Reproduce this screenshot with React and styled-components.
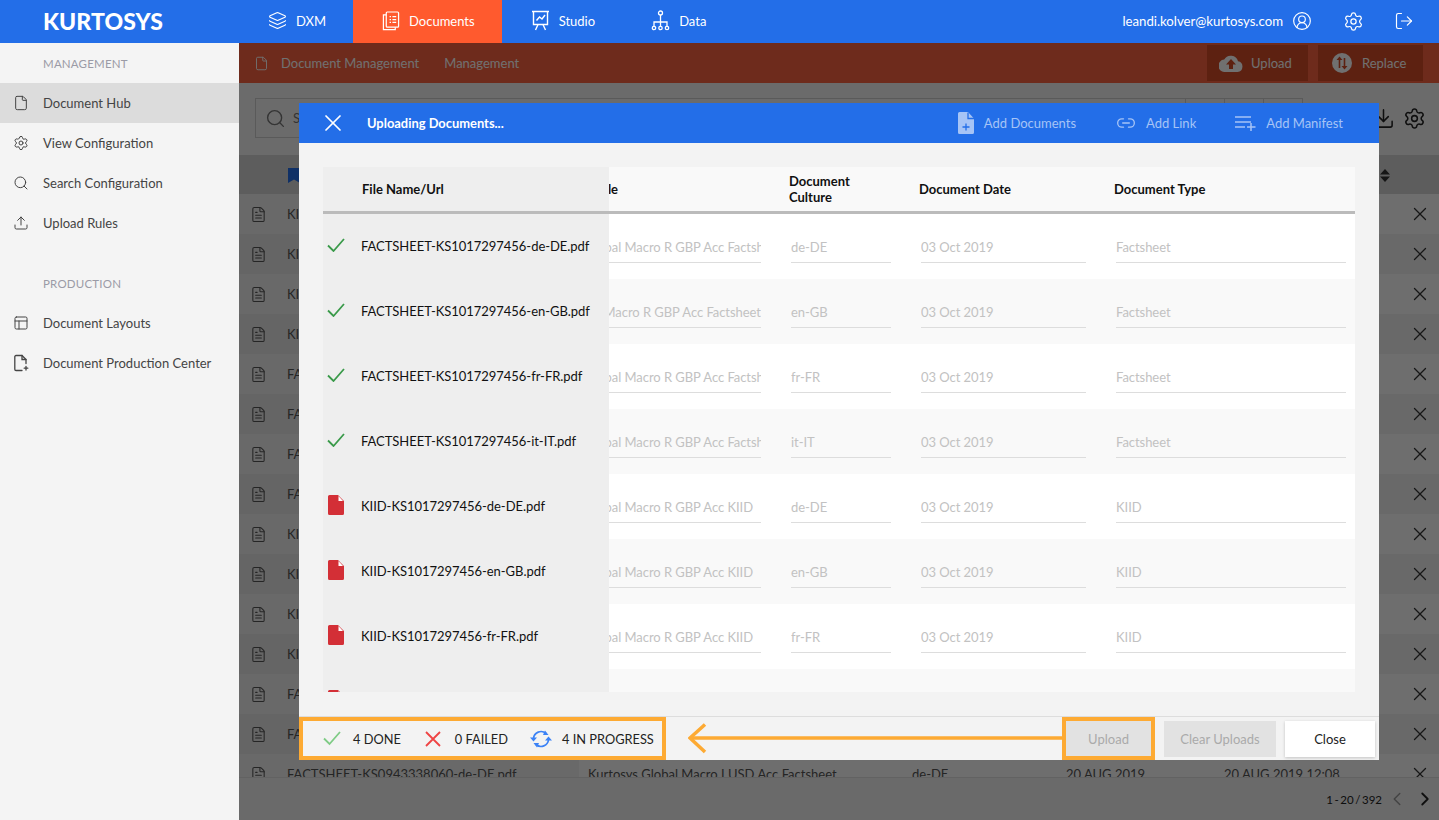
import React from 'react';
import styled, { createGlobalStyle } from 'styled-components';
import { ChevronLeft, ChevronRight, CircleUserRound, Download, File, FileText, Layers, Link2, LogOut, PanelsTopLeft, Search, Settings, Upload, X } from 'lucide-react';

const GlobalStyle = createGlobalStyle`
  html, body {
    margin: 0;
    height: 100%;
    overflow: hidden;
    background: #f4f4f4;
    font-family: Lato, 'Liberation Sans', sans-serif;
  }
  * {
    box-sizing: border-box;
  }
`;

const Page = styled.div`
  width: 1439px;
  height: 820px;
  display: flex;
  flex-direction: column;
  overflow: hidden;
`;

const TopBar = styled.header`
  height: 43px;
  flex: none;
  display: flex;
  align-items: stretch;
  background: #236ee8;
  color: #fff;
`;

const Logo = styled.div`
  width: 239px;
  padding-left: 43px;
  font-size: 23px;
  font-weight: 900;
  letter-spacing: 0.1px;
  line-height: 42px;
`;

const NavItem = styled.div`
  display: flex;
  align-items: center;
  gap: 9px;
  padding: 0 27px 2px 29px;
  font-size: 13px;
  background: ${(p) => (p.$active ? '#ff5a2e' : 'transparent')};
`;

const UserArea = styled.div`
  margin-left: auto;
  padding: 0 25px 1px 0;
  display: flex;
  align-items: center;
  font-size: 13.2px;
`;

const UserIcon = styled.span`
  display: flex;
  margin-left: ${(p) => p.$gap}px;
`;

const Content = styled.div`
  flex: 1;
  display: flex;
  min-height: 0;
`;

const Sidebar = styled.aside`
  width: 239px;
  flex: none;
  background: #f4f4f4;
`;

const SideTitle = styled.div`
  height: 40px;
  margin-top: ${(p) => (p.$spaced ? '20px' : '0')};
  padding: 1px 0 0 43px;
  line-height: 40px;
  font-size: 11.5px;
  letter-spacing: 0.2px;
  color: #9b9ba6;
`;

const SideItem = styled.div`
  height: 40px;
  padding-left: 13px;
  display: flex;
  align-items: center;
  gap: 14px;
  font-size: 13px;
  color: #444;
  background: ${(p) => (p.$active ? '#dcdcdc' : 'transparent')};
`;

const Main = styled.main`
  position: relative;
  flex: 1;
  min-width: 0;
  display: flex;
  flex-direction: column;
  background: #f4f4f4;
`;

const SubBar = styled.div`
  height: 40px;
  flex: none;
  padding: 0 16px 0 15px;
  display: flex;
  align-items: center;
  background: #fb6340;
  color: #fff;
  font-size: 13px;
  white-space: nowrap;
`;

const Crumb = styled.span`
  margin-left: ${(p) => p.$gap}px;
`;

const SubActions = styled.div`
  margin-left: auto;
  display: flex;
  gap: 10px;
`;

const SubButton = styled.div`
  width: ${(p) => p.$width}px;
  height: 36px;
  padding-left: ${(p) => p.$pad}px;
  display: flex;
  align-items: center;
  gap: ${(p) => p.$inner}px;
  background: #d44d28;
`;

const SearchRow = styled.div`
  height: 72px;
  flex: none;
  padding: 15px 13px 15px 16px;
  display: flex;
  align-items: flex-start;
  color: #222;
`;

const SearchBox = styled.div`
  width: 1048px;
  height: 40px;
  padding-left: 9px;
  display: flex;
  align-items: center;
  gap: 7px;
  border: 1px solid #ccc;
  font-size: 13px;
  color: #777;
`;

const SearchSegments = styled.div`
  margin-left: auto;
  height: 100%;
  display: flex;
`;

const SearchSegment = styled.div`
  width: 39px;
  border-left: 1px solid #ccc;
`;

const RowTools = styled.div`
  margin-left: auto;
  padding-top: 9px;
  display: flex;
  gap: 8px;
`;

const BackHead = styled.div`
  height: 39px;
  flex: none;
  padding: 1px 49px 0 49px;
  display: flex;
  align-items: center;
  justify-content: space-between;
  background: #d4d4d4;
`;

const BackRows = styled.div`
  flex: 1;
  min-height: 0;
  overflow: hidden;
`;

const BackRow = styled.div`
  height: 40px;
  display: grid;
  grid-template-columns: 340px 324px 154px 158px 1fr 32px;
  align-items: center;
  font-size: 13px;
  color: #555;
  background: ${(p) => (p.$odd ? '#f0f0f0' : '#fafafa')};
`;

const BackName = styled.div`
  height: 100%;
  padding-left: 11px;
  display: flex;
  align-items: center;
  gap: 20px;
  color: #555;
  background: rgba(0, 0, 0, 0.04);
`;

const BackCell = styled.div`
  padding-left: 9px;
  white-space: nowrap;
`;

const RemoveIcon = styled(X)`
  margin-left: 2px;
  color: #333;
`;

const Pagination = styled.div`
  height: 43px;
  flex: none;
  padding-right: 3px;
  display: flex;
  align-items: center;
  justify-content: flex-end;
  gap: 6px;
  border-top: 1px solid #e0e0e0;
  background: #f1f1f1;
  font-size: 11.5px;
  color: #222;
`;

const PageCount = styled.span`
  margin-right: -2px;
  word-spacing: -1.4px;
`;

const Scrim = styled.div`
  position: absolute;
  inset: 0;
  padding: 60px;
  background: rgba(0, 0, 0, 0.56);
`;

const Modal = styled.section`
  height: 100%;
  display: flex;
  flex-direction: column;
  background: #f3f3f3;
`;

const ModalHead = styled.div`
  height: 40px;
  flex: none;
  padding-left: 20px;
  padding-right: 36px;
  display: flex;
  align-items: center;
  background: #236ee8;
  color: #fff;
`;

const ModalTitle = styled.div`
  margin-left: 20px;
  font-size: 12.9px;
  font-weight: 700;
`;

const ModalAction = styled.div`
  margin-left: ${(p) => p.$gap};
  display: flex;
  align-items: center;
  gap: 10px;
  font-size: 13px;
  color: #a6c4f6;
`;

const ModalBody = styled.div`
  flex: 1;
  min-height: 0;
  padding: 24px;
`;

const TableWrap = styled.div`
  height: 100%;
  overflow: hidden;
  background: #fff;
`;

const HeadRow = styled.div`
  height: 47px;
  display: grid;
  grid-template-columns: 286px 180px 130px 195px 1fr;
  align-items: center;
  border-bottom: 3px solid #bbb;
  background: #f9f9f9;
  font-size: 13px;
  font-weight: 700;
  line-height: 16px;
  color: #111;
`;

const HeadName = styled.div`
  height: 100%;
  padding-left: 39px;
  display: flex;
  align-items: center;
  background: #eee;
`;

const HeadClip = styled.div`
  overflow: hidden;
`;

const HeadTitle = styled.div`
  margin-left: -17px;
`;

const HeadWrap = styled.div`
  width: 80px;
`;

const FileRow = styled.div`
  height: 65px;
  display: grid;
  grid-template-columns: 286px 182px 130px 195px 1fr;
  align-items: center;
  background: ${(p) => (p.$odd ? '#f9f9f9' : '#fff')};
`;

const NameCell = styled.div`
  height: 100%;
  padding: 0 0 2px 4px;
  display: flex;
  align-items: center;
  gap: 16px;
  background: #eee;
  font-size: 13px;
  letter-spacing: -0.04px;
  color: #111;
`;

const StatusSlot = styled.span`
  width: 18px;
  flex: none;
  margin-bottom: 1px;
  display: flex;
  justify-content: center;
`;

const Field = styled.div`
  height: 32px;
  margin-right: ${(p) => p.$right}px;
  overflow: hidden;
  white-space: nowrap;
  border-bottom: 1px solid #ddd;
  font-size: 13px;
  letter-spacing: -0.05px;
  line-height: 33px;
  color: #c2c2c2;
`;

const ShiftedText = styled.div`
  margin-left: ${(p) => p.$shift}px;
`;

const ModalFoot = styled.div`
  height: 44px;
  flex: none;
  display: flex;
  align-items: stretch;
  border-top: 1px solid #ddd;
`;

const StatusBox = styled.div`
  width: 367px;
  flex: none;
  padding-left: 20px;
  display: flex;
  align-items: center;
  border: 4px solid #fdaa33;
  font-size: 12.8px;
  color: #222;
`;

const StatusItem = styled.div`
  display: flex;
  align-items: center;
  gap: ${(p) => p.$gap}px;
  margin-right: ${(p) => p.$right}px;
`;

const ArrowSlot = styled.div`
  flex: 1;
  display: flex;
  align-items: center;
  padding-left: 22px;
`;

const UploadFrame = styled.div`
  width: 93px;
  flex: none;
  display: flex;
  border: 4px solid #fdaa33;
`;

const FootButton = styled.div`
  flex: ${(p) => (p.$width ? 'none' : '1')};
  width: ${(p) => (p.$width ? `${p.$width}px` : 'auto')};
  margin: ${(p) => p.$margin || '0'};
  display: flex;
  align-items: center;
  justify-content: center;
  font-size: 13px;
  color: ${(p) => (p.$primary ? '#222' : '#aaa')};
  background: ${(p) => (p.$primary ? '#fff' : '#e2e2e2')};
  box-shadow: ${(p) => (p.$primary ? '0 1px 3px rgba(0, 0, 0, 0.2)' : 'none')};
`;

const DocumentsIcon = () => (
  <svg width="18" height="20" viewBox="0 0 19 21" fill="none" stroke="#fff" strokeWidth="1.3">
    <rect x="4.5" y="1" width="13" height="16" rx="1" />
    <path d="M4.5 4H1.5V19.5H14V17" />
    <path d="M8 6h1.5M11 6h4M8 9h1.5M11 9h4M8 12h1.5M11 12h4" />
  </svg>
);

const StudioIcon = () => (
  <svg width="19" height="21" viewBox="0 0 19 21" fill="none" stroke="#fff" strokeWidth="1.4">
    <path d="M1 1.5h17M2.5 1.5V14.5h14V1.5" />
    <path d="M5.5 10.5l3-3.5 2.5 2 3-4" />
    <path d="M7 14.5L4.5 20M12 14.5l2.5 5.5" />
  </svg>
);

const DataIcon = () => (
  <svg width="19" height="21" viewBox="0 0 19 21" fill="none" stroke="#fff" strokeWidth="1.3">
    <circle cx="9.5" cy="3" r="2" />
    <path d="M9.5 5v11M3 17v-5h13v5" />
    <circle cx="3" cy="18" r="1.7" />
    <circle cx="9.5" cy="18" r="1.7" />
    <circle cx="16" cy="18" r="1.7" />
  </svg>
);

const ProductionIcon = () => (
  <svg width="16" height="18" viewBox="0 0 16 18" fill="none" stroke="#444" strokeWidth="1.3" strokeLinecap="round">
    <path d="M9 16.5H3a1.2 1.2 0 0 1-1.2-1.2V2.700A1.2 1.2 0 0 1 3 1.5h6l4 4v4" />
    <path d="M9 1.5v4h4M13 12.500v3.500M11.200 14.200h3.600" />
  </svg>
);

const CloudIcon = () => (
  <svg width="24" height="18" viewBox="0 0 24 18">
    <path fill="#fff" d="M19 7.3A7.5 7.5 0 0 0 5.2 5.6 6.2 6.2 0 0 0 6 18h12.5a5.4 5.4 0 0 0 .5-10.7z" />
    <path fill="#d44d28" d="M12 5l5 5.5h-3V15h-4v-4.5H7z" />
  </svg>
);

const ReplaceIcon = () => (
  <svg width="20" height="20" viewBox="0 0 20 20">
    <circle cx="10" cy="10" r="10" fill="#fff" />
    <path fill="none" stroke="#d44d28" strokeWidth="1.6" d="M7.5 15V6M12.5 5v9" />
    <path fill="#d44d28" d="M7.5 3.5l3 3.5h-6zM12.5 16.5l-3-3.5h6z" />
  </svg>
);

const AddDocIcon = () => (
  <svg width="16" height="22" viewBox="0 0 16 22">
    <path fill="#a6c4f6" d="M1.5 0H10l6 6.5v14a1.5 1.5 0 0 1-1.5 1.5h-13A1.5 1.5 0 0 1 0 20.5v-19A1.5 1.5 0 0 1 1.5 0z" />
    <path fill="none" stroke="#236ee8" strokeWidth="1.3" d="M8 11.500v7M4.500 15h7M10 0.500V6.500h6" />
  </svg>
);

const ManifestIcon = () => (
  <svg width="21" height="16" viewBox="0 0 21 16" fill="none" stroke="#a6c4f6" strokeWidth="1.5">
    <path d="M0 2h16M0 7h16M0 12h10M16 8v8M12 12h8.5" />
  </svg>
);

const BookmarkIcon = () => (
  <svg width="12" height="15" viewBox="0 0 12 15">
    <path fill="#236ee8" d="M0 0h12v15l-6-3.5L0 15z" />
  </svg>
);

const SortIcon = () => (
  <svg width="10" height="13" viewBox="0 0 10 13">
    <path fill="#333" d="M5 0l5 5.5H0zM5 13L0 7.5h10z" />
  </svg>
);

const CheckIcon = ({ color, width = 18 }) => (
  <svg width={width} height={width * 0.8} viewBox="0 0 18 14.4" fill="none" stroke={color} strokeWidth="1.8">
    <path d="M1 7.5l5.5 5.500L17 1" />
  </svg>
);

const FailIcon = () => (
  <svg width="16" height="16" viewBox="0 0 16 16" fill="none" stroke="#ef4444" strokeWidth="1.8">
    <path d="M1 1l14 14M15 1L1 15" />
  </svg>
);

const SyncIcon = () => (
  <svg width="22" height="18" viewBox="0 0 22 18">
    <g fill="none" stroke="#3b82f6" strokeWidth="1.7">
      <path d="M3.5 8.5A7.5 7.5 0 0 1 16 3.5" />
      <path d="M18.5 9.5A7.5 7.5 0 0 1 6 14.5" />
    </g>
    <path fill="#3b82f6" d="M0 7.5h7l-3.5 4zM22 10.5h-7l3.5-4zM15 0.500l3.500 4.500H13z" />
    <path fill="#3b82f6" d="M7 17.5L3.500 13H9z" />
  </svg>
);

const RedDocIcon = () => (
  <svg width="16" height="20" viewBox="0 0 16 20">
    <path fill="#d32f36" d="M1.5 0H10l6 6v12.5a1.5 1.5 0 0 1-1.5 1.5h-13A1.5 1.5 0 0 1 0 18.5v-17A1.5 1.5 0 0 1 1.5 0z" />
    <path fill="#fff" d="M10.5 1l4.500 5h-4.500z" />
  </svg>
);

const ArrowIcon = () => (
  <svg width="374" height="32" viewBox="0 0 374 32" fill="none" stroke="#fdaa33" strokeWidth="3.5">
    <path d="M374 15H2" />
    <path d="M17 1.500L2 15l15 14" />
  </svg>
);

const sideManagement = [
  { label: 'Document Hub', icon: <File size={16} strokeWidth={1.5} />, active: true },
  { label: 'View Configuration', icon: <Settings size={16} strokeWidth={1.5} /> },
  { label: 'Search Configuration', icon: <Search size={16} strokeWidth={1.5} /> },
  { label: 'Upload Rules', icon: <Upload size={16} strokeWidth={1.5} /> },
];

const sideProduction = [
  { label: 'Document Layouts', icon: <PanelsTopLeft size={16} strokeWidth={1.5} /> },
  { label: 'Document Production Center', icon: <ProductionIcon /> },
];

const backRows = [
  ['KIID-KS1017297456-de-DE.pdf', 'Kurtosys Global Macro R GBP Acc KIID', 'de-DE'],
  ['KIID-KS1017297456-en-GB.pdf', 'Kurtosys Global Macro R GBP Acc KIID', 'en-GB'],
  ['KIID-KS1017297456-fr-FR.pdf', 'Kurtosys Global Macro R GBP Acc KIID', 'fr-FR'],
  ['KIID-KS1017297456-it-IT.pdf', 'Kurtosys Global Macro R GBP Acc KIID', 'it-IT'],
  ['FACTSHEET-KS1017297456-de-DE.pdf', 'Kurtosys Global Macro R GBP Acc Factsheet', 'de-DE'],
  ['FACTSHEET-KS1017297456-en-GB.pdf', 'Kurtosys Global Macro R GBP Acc Factsheet', 'en-GB'],
  ['FACTSHEET-KS1017297456-fr-FR.pdf', 'Kurtosys Global Macro R GBP Acc Factsheet', 'fr-FR'],
  ['FACTSHEET-KS1017297456-it-IT.pdf', 'Kurtosys Global Macro R GBP Acc Factsheet', 'it-IT'],
  ['KIID-KS0943338060-de-DE.pdf', 'Kurtosys Global Macro I USD Acc KIID', 'de-DE'],
  ['KIID-KS0943338060-en-GB.pdf', 'Kurtosys Global Macro I USD Acc KIID', 'en-GB'],
  ['KIID-KS0943338060-fr-FR.pdf', 'Kurtosys Global Macro I USD Acc KIID', 'fr-FR'],
  ['KIID-KS0943338060-it-IT.pdf', 'Kurtosys Global Macro I USD Acc KIID', 'it-IT'],
  ['FACTSHEET-KS0943338060-it-IT.pdf', 'Kurtosys Global Macro I USD Acc Factsheet', 'it-IT'],
  ['FACTSHEET-KS0943338060-fr-FR.pdf', 'Kurtosys Global Macro I USD Acc Factsheet', 'fr-FR'],
  ['FACTSHEET-KS0943338060-de-DE.pdf', 'Kurtosys Global Macro I USD Acc Factsheet', 'de-DE'],
];

const uploads = [
  { name: 'FACTSHEET-KS1017297456-de-DE.pdf', title: 'Kurtosys Global Macro R GBP Acc Factsheet', culture: 'de-DE', type: 'Factsheet', done: true, shift: -77 },
  { name: 'FACTSHEET-KS1017297456-en-GB.pdf', title: 'Kurtosys Global Macro R GBP Acc Factsheet', culture: 'en-GB', type: 'Factsheet', done: true, shift: -98 },
  { name: 'FACTSHEET-KS1017297456-fr-FR.pdf', title: 'Kurtosys Global Macro R GBP Acc Factsheet', culture: 'fr-FR', type: 'Factsheet', done: true, shift: -77 },
  { name: 'FACTSHEET-KS1017297456-it-IT.pdf', title: 'Kurtosys Global Macro R GBP Acc Factsheet', culture: 'it-IT', type: 'Factsheet', done: true, shift: -77 },
  { name: 'KIID-KS1017297456-de-DE.pdf', title: 'Kurtosys Global Macro R GBP Acc KIID', culture: 'de-DE', type: 'KIID', shift: -77 },
  { name: 'KIID-KS1017297456-en-GB.pdf', title: 'Kurtosys Global Macro R GBP Acc KIID', culture: 'en-GB', type: 'KIID', shift: -77 },
  { name: 'KIID-KS1017297456-fr-FR.pdf', title: 'Kurtosys Global Macro R GBP Acc KIID', culture: 'fr-FR', type: 'KIID', shift: -77 },
  { name: 'KIID-KS1017297456-it-IT.pdf', title: 'Kurtosys Global Macro R GBP Acc KIID', culture: 'it-IT', type: 'KIID', shift: -77 },
];

export default function App() {
  return (
    <Page>
      <GlobalStyle />
      <TopBar>
        <Logo>KURTOSYS</Logo>
        <NavItem><Layers size={19} strokeWidth={1.4} />DXM</NavItem>
        <NavItem $active><DocumentsIcon />Documents</NavItem>
        <NavItem><StudioIcon />Studio</NavItem>
        <NavItem><DataIcon />Data</NavItem>
        <UserArea>
          leandi.kolver@kurtosys.com
          <UserIcon $gap={9}><CircleUserRound size={20} strokeWidth={1.4} /></UserIcon>
          <UserIcon $gap={31}><Settings size={21} strokeWidth={1.4} /></UserIcon>
          <UserIcon $gap={30}><LogOut size={20} strokeWidth={1.4} /></UserIcon>
        </UserArea>
      </TopBar>
      <Content>
        <Sidebar>
          <SideTitle>MANAGEMENT</SideTitle>
          {sideManagement.map((item) => (
            <SideItem key={item.label} $active={item.active}>{item.icon}{item.label}</SideItem>
          ))}
          <SideTitle $spaced>PRODUCTION</SideTitle>
          {sideProduction.map((item) => (
            <SideItem key={item.label}>{item.icon}{item.label}</SideItem>
          ))}
        </Sidebar>
        <Main>
          <SubBar>
            <File size={15} strokeWidth={1.5} />
            <Crumb $gap={12}>Document Management</Crumb>
            <Crumb $gap={25}>Management</Crumb>
            <SubActions>
              <SubButton $width={101} $pad={12} $inner={8}><CloudIcon />Upload</SubButton>
              <SubButton $width={105} $pad={14} $inner={10}><ReplaceIcon />Replace</SubButton>
            </SubActions>
          </SubBar>
          <SearchRow>
            <SearchBox>
              <Search size={21} strokeWidth={1.6} />Search
              <SearchSegments><SearchSegment /><SearchSegment /><SearchSegment /></SearchSegments>
            </SearchBox>
            <RowTools>
              <Download size={23} strokeWidth={1.6} />
              <Settings size={23} strokeWidth={1.6} />
            </RowTools>
          </SearchRow>
          <BackHead><BookmarkIcon /><SortIcon /></BackHead>
          <BackRows>
            {backRows.map(([name, title, culture], i) => (
              <BackRow key={name} $odd={i % 2 === 1}>
                <BackName><FileText size={17} strokeWidth={1.5} />{name}</BackName>
                <BackCell>{title}</BackCell>
                <BackCell>{culture}</BackCell>
                <BackCell>20 AUG 2019</BackCell>
                <BackCell>20 AUG 2019 12:08</BackCell>
                <RemoveIcon size={22} strokeWidth={1.4} />
              </BackRow>
            ))}
          </BackRows>
          <Pagination>
            <PageCount>1 - 20 / 392</PageCount>
            <ChevronLeft size={22} strokeWidth={1.6} color="#999" />
            <ChevronRight size={22} strokeWidth={2} />
          </Pagination>
          <Scrim>
            <Modal>
              <ModalHead>
                <X size={28} strokeWidth={1.5} />
                <ModalTitle>Uploading Documents...</ModalTitle>
                <ModalAction $gap="auto"><AddDocIcon />Add Documents</ModalAction>
                <ModalAction $gap="40px"><Link2 size={20} strokeWidth={1.6} />Add Link</ModalAction>
                <ModalAction $gap="39px"><ManifestIcon />Add Manifest</ModalAction>
              </ModalHead>
              <ModalBody>
                <TableWrap>
                  <HeadRow>
                    <HeadName>File Name/Url</HeadName>
                    <HeadClip><HeadTitle>Title</HeadTitle></HeadClip>
                    <HeadWrap>Document Culture</HeadWrap>
                    <div>Document Date</div>
                    <div>Document Type</div>
                  </HeadRow>
                  {uploads.map((file, i) => (
                    <FileRow key={file.name} $odd={i % 2 === 1}>
                      <NameCell>
                        <StatusSlot>{file.done ? <CheckIcon color="#3a9a4a" /> : <RedDocIcon />}</StatusSlot>
                        {file.name}
                      </NameCell>
                      <Field $right={30}><ShiftedText $shift={file.shift}>{file.title}</ShiftedText></Field>
                      <Field $right={30}>{file.culture}</Field>
                      <Field $right={30}>03 Oct 2019</Field>
                      <Field $right={9}>{file.type}</Field>
                    </FileRow>
                  ))}
                </TableWrap>
              </ModalBody>
              <ModalFoot>
                <StatusBox>
                  <StatusItem $gap={12} $right={24}><CheckIcon color="#7ecb85" />4 DONE</StatusItem>
                  <StatusItem $gap={14} $right={22}><FailIcon />0 FAILED</StatusItem>
                  <StatusItem $gap={10} $right={0}><SyncIcon />4 IN PROGRESS</StatusItem>
                </StatusBox>
                <ArrowSlot><ArrowIcon /></ArrowSlot>
                <UploadFrame><FootButton>Upload</FootButton></UploadFrame>
                <FootButton $width={112} $margin="4px 0 3px 9px">Clear Uploads</FootButton>
                <FootButton $width={90} $primary $margin="4px 4px 3px 9px">Close</FootButton>
              </ModalFoot>
            </Modal>
          </Scrim>
        </Main>
      </Content>
    </Page>
  );
}
